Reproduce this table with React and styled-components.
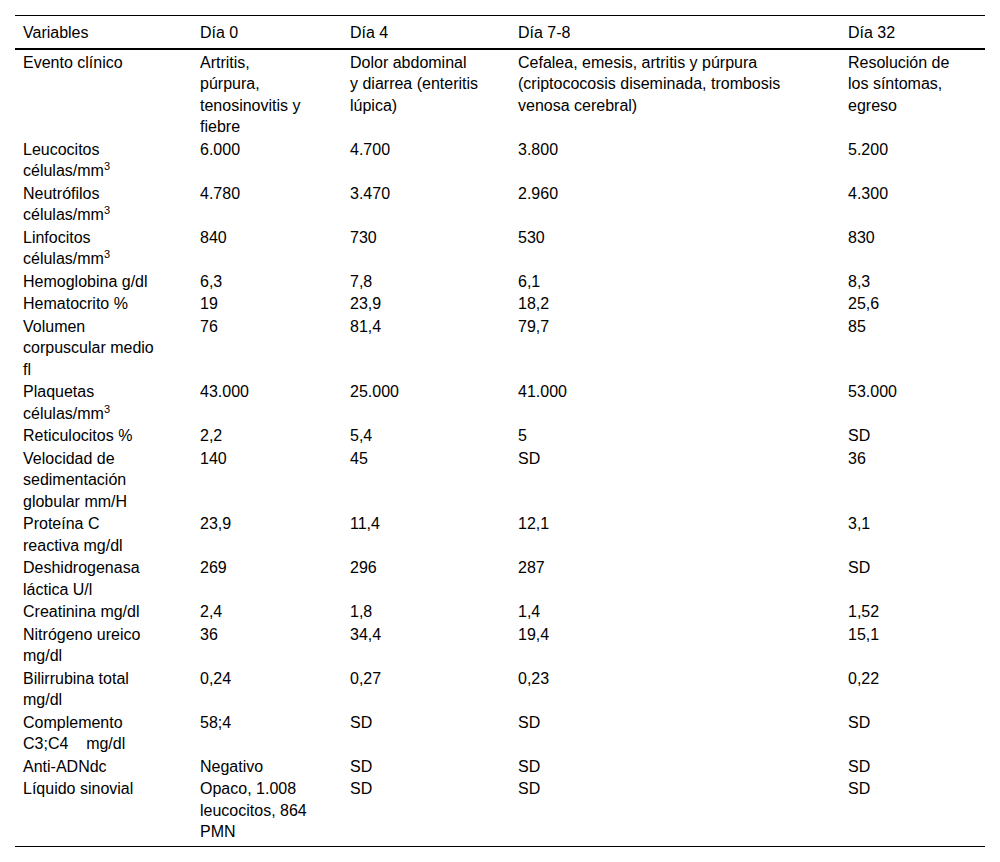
import React from 'react';
import styled, { createGlobalStyle } from 'styled-components';

const GlobalStyle = createGlobalStyle`
  html, body {
    margin: 0;
    padding: 0;
    background: #fff;
  }
  body {
    font-family: "Liberation Sans", Arial, sans-serif;
    color: #000;
  }
`;

const Page = styled.div`
  padding: 15px;
`;

const Table = styled.table`
  width: 970px;
  table-layout: fixed;
  border-collapse: collapse;
  font-size: 16px;
  line-height: 21.5px;
  border-top: 1px solid #000;
  border-bottom: 1px solid #000;
`;

const HeadRow = styled.tr`
  border-bottom: 2px solid #000;
`;

const HeadCell = styled.th`
  text-align: left;
  font-weight: normal;
  vertical-align: top;
  padding: 6px 8px 4px 8px;
  white-space: nowrap;
`;

const Cell = styled.td`
  vertical-align: top;
  padding: ${props => (props.$first ? '2px' : '0.5px')} 8px ${props => (props.$last ? '3px' : '0.5px')} 8px;
  white-space: nowrap;
`;

const Sup = styled.sup`
  font-size: 11px;
  line-height: 0;
  vertical-align: 6px;
`;

const mm3 = (
  <>
    células/mm<Sup>3</Sup>
  </>
);

const br = (...lines) =>
  lines.map((l, i) => (
    <React.Fragment key={i}>
      {i > 0 && <br />}
      {l}
    </React.Fragment>
  ));

const headers = ['Variables', 'Día 0', 'Día 4', 'Día 7-8', 'Día 32'];
const widths = [177, 150, 168, 330, 145];

const rows = [
  [
    'Evento clínico',
    br('Artritis,', 'púrpura,', 'tenosinovitis y', 'fiebre'),
    br('Dolor abdominal', 'y diarrea (enteritis', 'lúpica)'),
    br('Cefalea, emesis, artritis y púrpura', '(criptococosis diseminada, trombosis', 'venosa cerebral)'),
    br('Resolución de', 'los síntomas,', 'egreso')
  ],
  [br('Leucocitos', mm3), '6.000', '4.700', '3.800', '5.200'],
  [br('Neutrófilos', mm3), '4.780', '3.470', '2.960', '4.300'],
  [br('Linfocitos', mm3), '840', '730', '530', '830'],
  ['Hemoglobina g/dl', '6,3', '7,8', '6,1', '8,3'],
  ['Hematocrito %', '19', '23,9', '18,2', '25,6'],
  [br('Volumen', 'corpuscular medio', 'fl'), '76', '81,4', '79,7', '85'],
  [br('Plaquetas', mm3), '43.000', '25.000', '41.000', '53.000'],
  ['Reticulocitos %', '2,2', '5,4', '5', 'SD'],
  [br('Velocidad de', 'sedimentación', 'globular mm/H'), '140', '45', 'SD', '36'],
  [br('Proteína C', 'reactiva mg/dl'), '23,9', '11,4', '12,1', '3,1'],
  [br('Deshidrogenasa', 'láctica U/l'), '269', '296', '287', 'SD'],
  ['Creatinina mg/dl', '2,4', '1,8', '1,4', '1,52'],
  [br('Nitrógeno ureico', 'mg/dl'), '36', '34,4', '19,4', '15,1'],
  [br('Bilirrubina total', 'mg/dl'), '0,24', '0,27', '0,23', '0,22'],
  [br('Complemento', 'C3;C4\u00a0\u00a0\u00a0\u00a0mg/dl'), '58;4', 'SD', 'SD', 'SD'],
  ['Anti-ADNdc', 'Negativo', 'SD', 'SD', 'SD'],
  ['Líquido sinovial', br('Opaco, 1.008', 'leucocitos, 864', 'PMN'), 'SD', 'SD', 'SD']
];

export default function App() {
  return (
    <Page>
      <GlobalStyle />
      <Table>
        <colgroup>
          {widths.map((w, i) => (
            <col key={i} style={{ width: w }} />
          ))}
        </colgroup>
        <thead>
          <HeadRow>
            {headers.map(h => (
              <HeadCell key={h}>{h}</HeadCell>
            ))}
          </HeadRow>
        </thead>
        <tbody>
          {rows.map((row, r) => (
            <tr key={r}>
              {row.map((c, i) => (
                <Cell key={i} $first={r === 0} $last={r === rows.length - 1}>
                  {c}
                </Cell>
              ))}
            </tr>
          ))}
        </tbody>
      </Table>
    </Page>
  );
}
